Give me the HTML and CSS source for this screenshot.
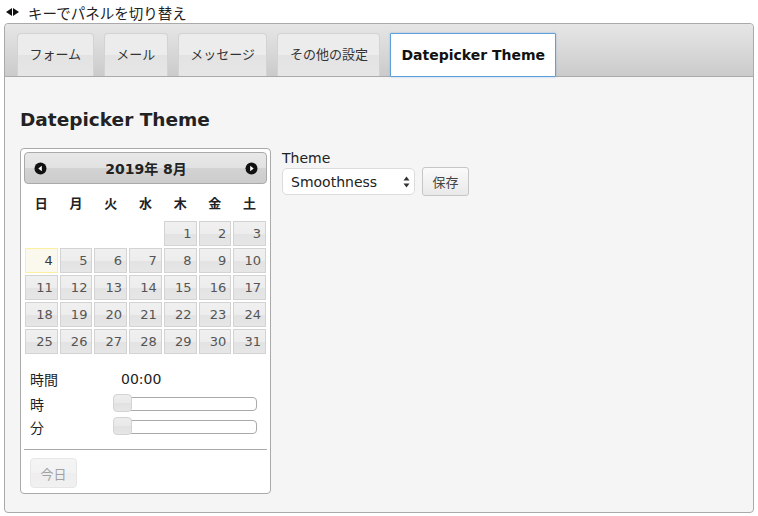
FILE: index.html
```html
<!DOCTYPE html>
<html lang="ja">
<head>
<meta charset="utf-8">
<title>Datepicker Theme</title>
<link rel="stylesheet" href="styles.css">
</head>
<body>
<div class="switch">
  <svg class="switch-icon" width="13" height="8" viewBox="0 0 13 8"><path d="M0 4 L6 0 L6 8 Z" fill="#111"/><path d="M13 4 L7 0 L7 8 Z" fill="#111"/></svg>
  <span>キーでパネルを切り替え</span>
</div>
<div class="tabs">
  <ul class="tab-nav">
    <li class="tab">フォーム</li>
    <li class="tab">メール</li>
    <li class="tab">メッセージ</li>
    <li class="tab">その他の設定</li>
    <li class="tab active">Datepicker Theme</li>
  </ul>
  <div class="panel">
    <h2 class="panel-title">Datepicker Theme</h2>
    <div class="panel-body">
      <div class="datepicker">
        <div class="dp-header">
          <svg class="dp-nav" width="13" height="13" viewBox="0 0 13 13"><circle cx="6.5" cy="6.5" r="6" fill="#111"/><path d="M4.3 6.5 L7.8 3.8 L7.8 9.2 Z" fill="#fff"/></svg>
          <span class="dp-title">2019年 8月</span>
          <svg class="dp-nav" width="13" height="13" viewBox="0 0 13 13"><circle cx="6.5" cy="6.5" r="6" fill="#111"/><path d="M8.7 6.5 L5.2 3.8 L5.2 9.2 Z" fill="#fff"/></svg>
        </div>
        <table class="dp-cal">
          <thead>
            <tr><th>日</th><th>月</th><th>火</th><th>水</th><th>木</th><th>金</th><th>土</th></tr>
          </thead>
          <tbody>
            <tr><td></td><td></td><td></td><td></td><td><a class="day">1</a></td><td><a class="day">2</a></td><td><a class="day">3</a></td></tr>
            <tr><td><a class="day today">4</a></td><td><a class="day">5</a></td><td><a class="day">6</a></td><td><a class="day">7</a></td><td><a class="day">8</a></td><td><a class="day">9</a></td><td><a class="day">10</a></td></tr>
            <tr><td><a class="day">11</a></td><td><a class="day">12</a></td><td><a class="day">13</a></td><td><a class="day">14</a></td><td><a class="day">15</a></td><td><a class="day">16</a></td><td><a class="day">17</a></td></tr>
            <tr><td><a class="day">18</a></td><td><a class="day">19</a></td><td><a class="day">20</a></td><td><a class="day">21</a></td><td><a class="day">22</a></td><td><a class="day">23</a></td><td><a class="day">24</a></td></tr>
            <tr><td><a class="day">25</a></td><td><a class="day">26</a></td><td><a class="day">27</a></td><td><a class="day">28</a></td><td><a class="day">29</a></td><td><a class="day">30</a></td><td><a class="day">31</a></td></tr>
          </tbody>
        </table>
        <div class="dp-time">
          <div class="t-row t-row-main"><span class="t-label">時間</span><span class="t-value">00:00</span></div>
          <div class="t-row"><span class="t-label">時</span><div class="slider"><span class="handle"></span></div></div>
          <div class="t-row"><span class="t-label">分</span><div class="slider"><span class="handle"></span></div></div>
        </div>
        <div class="dp-buttons"><button class="today-btn" type="button">今日</button></div>
      </div>
      <div class="theme-form">
        <label class="theme-label" for="theme">Theme</label>
        <div class="theme-row">
          <div class="select-wrap">
            <select id="theme" class="theme-select"><option>Smoothness</option></select>
            <svg class="select-arrows" width="7" height="12" viewBox="0 0 7 12"><path d="M3.5 0.5 L6.5 4.5 L0.5 4.5 Z" fill="#333"/><path d="M3.5 11.5 L6.5 7.5 L0.5 7.5 Z" fill="#333"/></svg>
          </div>
          <button class="save-btn" type="button">保存</button>
        </div>
      </div>
    </div>
  </div>
</div>
</body>
</html>
```
FILE: styles.css
```css
html, body {
  height: 100%;
}
body {
  margin: 0;
  padding: 4px 4px 3px 4px;
  box-sizing: border-box;
  display: flex;
  flex-direction: column;
  font-family: "DejaVu Sans", "Noto Sans CJK JP", sans-serif;
  color: #222;
  background: #fff;
}
.switch {
  height: 19px;
  box-sizing: border-box;
  padding: 0 0 3px 2px;
  display: flex;
  align-items: center;
  gap: 9px;
  font-size: 14.5px;
  color: #222;
}
.switch-icon {
  display: block;
}
.tabs {
  flex: 1;
  display: flex;
  flex-direction: column;
  border: 1px solid #aaa;
  border-radius: 4px;
  background: #f5f5f5;
  overflow: hidden;
}
.tab-nav {
  list-style: none;
  margin: 0;
  padding: 9px 12px 0;
  height: 53px;
  box-sizing: border-box;
  display: flex;
  align-items: flex-start;
  gap: 10px;
  background: linear-gradient(#e6e6e6, #cbcbcb);
  border-bottom: 1px solid #aaa;
  border-radius: 4px 4px 0 0;
}
.tab {
  height: 43px;
  box-sizing: border-box;
  padding: 0 11.5px 3px;
  display: flex;
  align-items: center;
  font-size: 13px;
  color: #333;
  border: 1px solid #d3d3d3;
  border-bottom: none;
  border-radius: 4px 4px 0 0;
  background: linear-gradient(#ececec 0%, #ececec 50%, #e3e3e3 51%, #e6e6e6 100%);
}
.tab.active {
  height: 44px;
  margin-bottom: -1px;
  padding: 0 10px 1px;
  background: #fff;
  border: 1px solid #5fa0dc;
  border-radius: 1px;
  box-shadow: 0 0 2px rgba(95, 160, 220, 0.6);
  font-size: 14px;
  font-weight: bold;
  color: #111;
}
.panel {
  flex: 1;
  padding: 31px 15px 10px;
}
.panel-title {
  margin: 0 0 16px;
  font-size: 18.5px;
  line-height: 24px;
  font-weight: bold;
  color: #222;
}
.panel-body {
  display: flex;
  align-items: flex-start;
  gap: 11px;
}
.datepicker {
  width: 251px;
  box-sizing: border-box;
  border: 1px solid #aaa;
  border-radius: 4px;
  padding: 3px;
  background: #fff;
}
.dp-header {
  height: 32px;
  box-sizing: border-box;
  border: 1px solid #aaa;
  border-radius: 4px;
  background: linear-gradient(#e8e8e8 0%, #e2e2e2 50%, #d3d3d3 51%, #cccccc 100%);
  display: flex;
  align-items: center;
  justify-content: space-between;
  padding: 0 8px 0 9px;
}
.dp-nav {
  display: block;
}
.dp-title {
  font-size: 14px;
  font-weight: bold;
  color: #222;
}
.dp-cal {
  width: 100%;
  border-collapse: collapse;
  table-layout: fixed;
  font-size: 13px;
}
.dp-cal th {
  height: 36px;
  padding: 0;
  text-align: center;
  font-weight: bold;
  color: #222;
}
.dp-cal td {
  padding: 1px;
}
.day {
  display: block;
  height: 25px;
  box-sizing: border-box;
  border: 1px solid #d3d3d3;
  background: linear-gradient(#f0f0f0 0%, #ededed 50%, #e3e3e3 51%, #e6e6e6 100%);
  line-height: 23px;
  padding: 0 4px;
  text-align: right;
  color: #555;
}
.day.today {
  border-color: #fcefa1;
  background: #fbf9ee;
  color: #363636;
}
.dp-time {
  padding: 10px 0 0 6px;
  font-size: 14px;
  color: #222;
}
.t-row {
  display: grid;
  grid-template-columns: 84px 143px;
  align-items: center;
  height: 23px;
}
.t-row-main {
  height: 27px;
}
.t-value {
  padding-left: 7px;
}
.slider {
  position: relative;
  height: 14px;
  box-sizing: border-box;
  border: 1px solid #aaa;
  border-radius: 4px;
  background: #fff;
}
.handle {
  position: absolute;
  left: -2px;
  top: -4px;
  width: 19px;
  height: 18px;
  box-sizing: border-box;
  border: 1px solid #d3d3d3;
  border-radius: 4px;
  background: linear-gradient(#ededed 0%, #e9e9e9 50%, #e1e1e1 51%, #e6e6e6 100%);
}
.dp-buttons {
  margin-top: 11px;
  border-top: 1px solid #aaa;
  padding: 8px 0 2px 6px;
}
.today-btn {
  display: block;
  width: 47px;
  height: 30px;
  padding: 0;
  font-family: "DejaVu Sans", "Noto Sans CJK JP", sans-serif;
  font-size: 13px;
  color: #555;
  border: 1px solid #d3d3d3;
  border-radius: 4px;
  background: linear-gradient(#ededed 0%, #e9e9e9 50%, #e1e1e1 51%, #e6e6e6 100%);
  opacity: 0.55;
}
.theme-form {
  padding-top: 1px;
  font-size: 14px;
}
.theme-label {
  display: block;
  line-height: 18px;
  color: #222;
}
.theme-row {
  display: flex;
  align-items: center;
  gap: 7px;
  height: 29px;
}
.select-wrap {
  position: relative;
  width: 133px;
  height: 27px;
}
.theme-select {
  -webkit-appearance: none;
  appearance: none;
  width: 100%;
  height: 100%;
  box-sizing: border-box;
  margin: 0;
  padding: 0 0 0 8px;
  border: 1px solid #dcdcdc;
  border-radius: 5px;
  background: #fff;
  font-family: "DejaVu Sans", sans-serif;
  font-size: 14px;
  color: #222;
}
.select-arrows {
  position: absolute;
  right: 5px;
  top: 8px;
  pointer-events: none;
}
.save-btn {
  width: 47px;
  height: 29px;
  padding: 0;
  font-family: "DejaVu Sans", "Noto Sans CJK JP", sans-serif;
  font-size: 13px;
  color: #444;
  border: 1px solid #c6c6c6;
  border-radius: 3px;
  background: linear-gradient(#fafafa, #e9e9e9);
}
```
